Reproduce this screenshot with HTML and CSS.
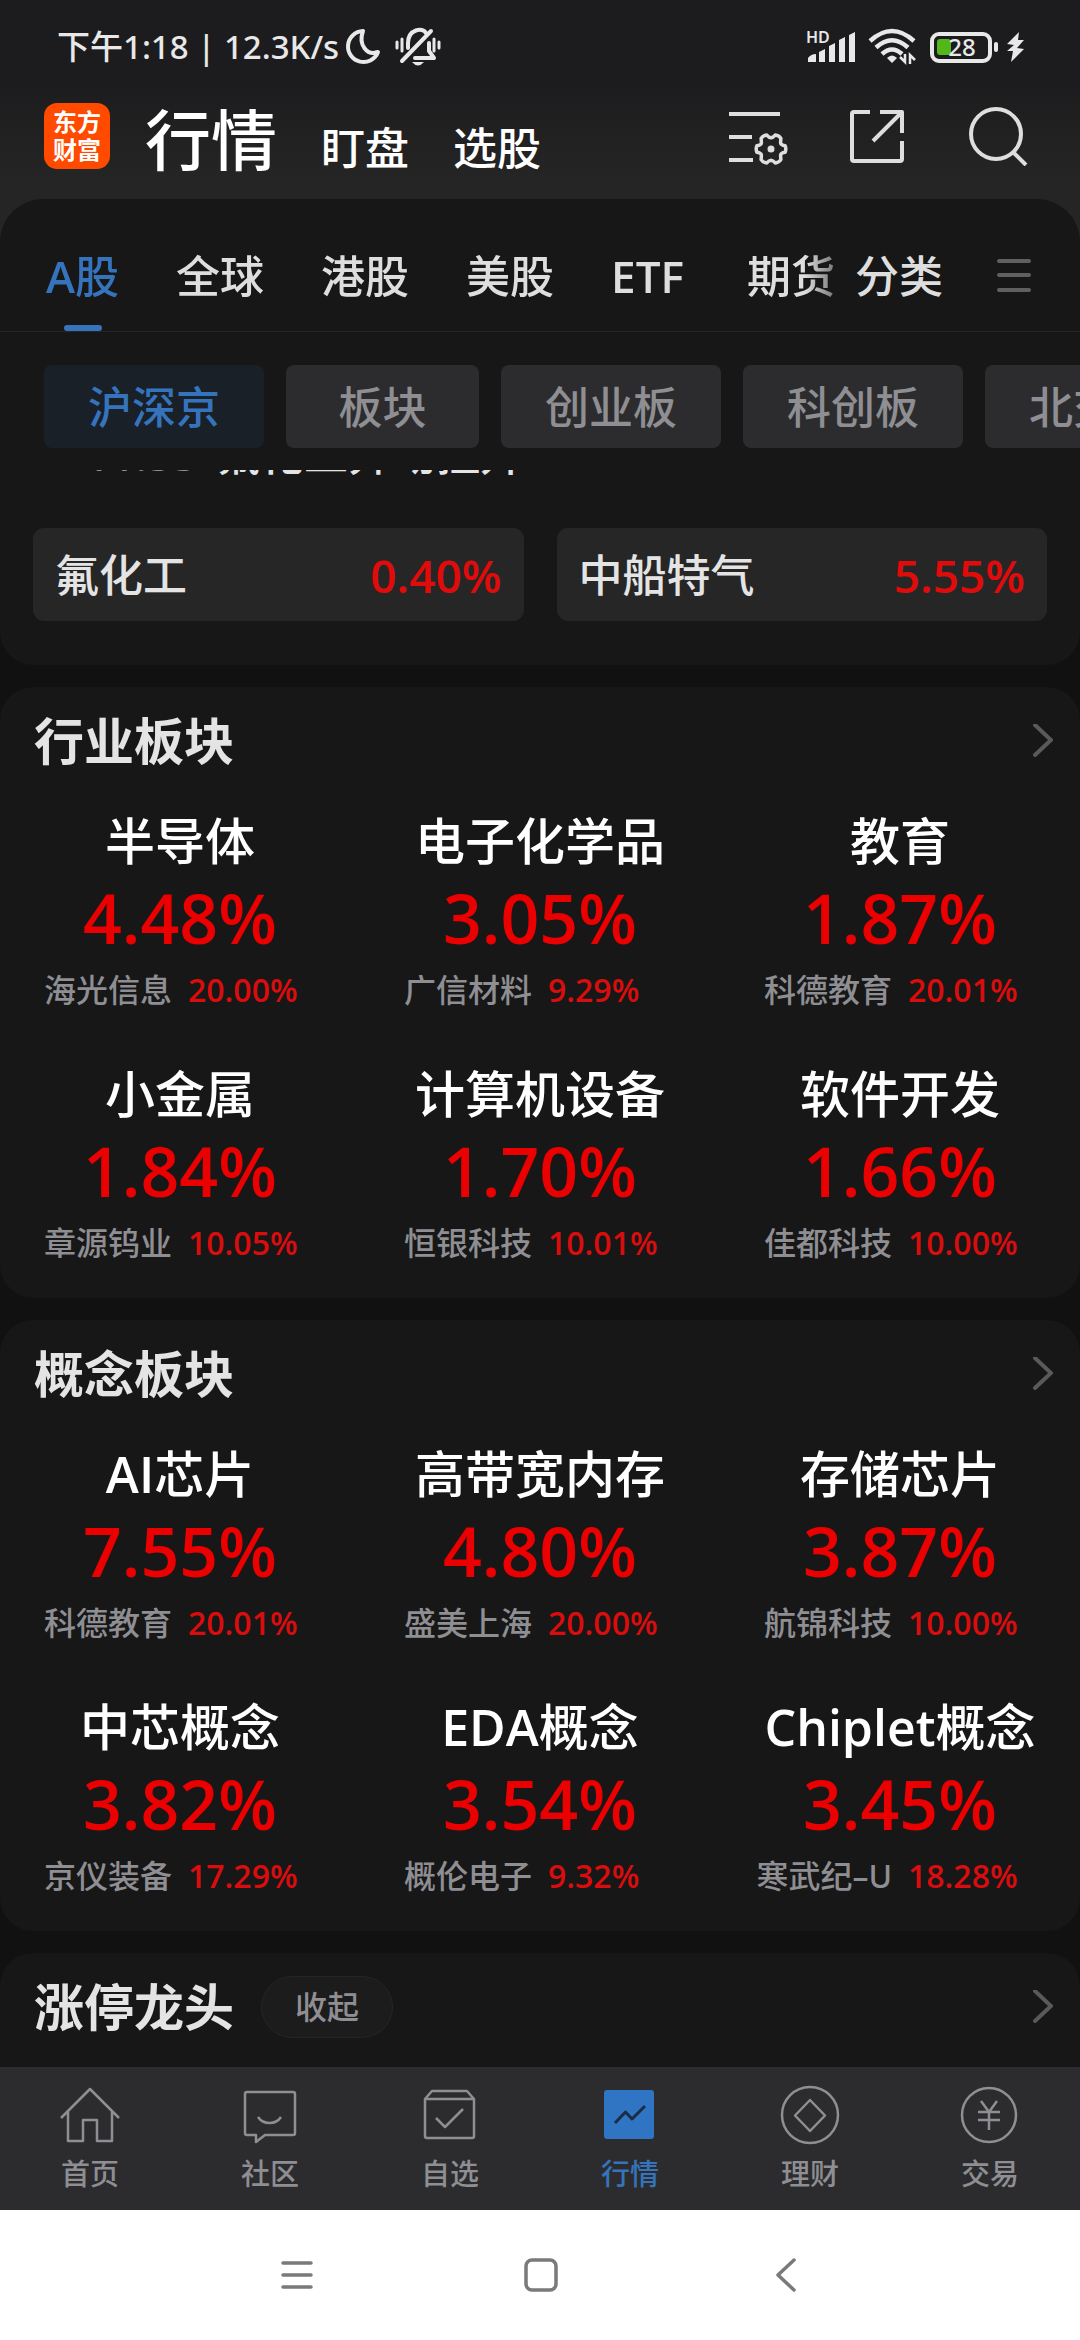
FILE: index.html
```html
<!DOCTYPE html>
<html lang="zh-CN">
<head>
<meta charset="utf-8">
<meta name="viewport" content="width=device-width, initial-scale=1">
<title>行情</title>
<link rel="stylesheet" href="styles.css">
</head>
<body>
<div class="app">
  <div class="status">
    <span class="status-text">下午1:18 | 12.3K/s</span>
    <svg class="moon" width="36" height="38" viewBox="0 0 36 38" fill="none" stroke="#e8e8e8" stroke-width="4" stroke-linejoin="round"><path d="M18 3A15.500 15.500 0 1 0 33 24C22 28 13 17 18 3Z"/></svg>
    <svg width="46" height="40" viewBox="0 0 46 40" fill="none" stroke="#e8e8e8" stroke-width="4" stroke-linecap="round" stroke-linejoin="round"><path d="M13 21V16C13 2 28 0 31 6M34 16V24L39 31H20M7 34L36 4"/><path d="M2 15V21M7 12V24M39 12V24M44 15V21" stroke-width="3"/><path d="M17 35H29Q23 42 17 35Z" fill="#e8e8e8" stroke="none"/></svg>
    <span class="grow"></span>
    <svg width="51" height="38" viewBox="0 0 51 38" fill="#e8e8e8"><text x="0" y="15" class="hd">HD</text><path d="M2 34V30Q5 26 10 26V34ZM13 34V24L19 21V34ZM23 34V18L29 15V34ZM33 34V12L39 9V34ZM43 34V7L49 4V34Z"/></svg>
    <svg class="wifi" width="48" height="38" viewBox="0 0 48 38" fill="none" stroke="#e8e8e8" stroke-width="4.500"><path d="M2 13Q24 -7 46 13M8 19.500Q24 5 40 19.500M14 26Q24 17 34 26"/><path d="M24 35L19 30Q24 25 29 30Z" fill="#e8e8e8" stroke="none"/><path d="M37 26V34L32 29M42 36V27L47 32" stroke-width="2.500"/></svg>
    <svg class="battery" width="68" height="32" viewBox="0 0 68 32"><rect x="2" y="3" width="58" height="27" rx="7" fill="none" stroke="#e8e8e8" stroke-width="4"/><rect x="7" y="8" width="14" height="16" rx="3" fill="#52b718"/><rect x="64" y="11" width="4" height="10" rx="2" fill="#e8e8e8"/><text x="32" y="25" text-anchor="middle" class="level">28</text></svg>
    <svg class="bolt" width="20" height="32" viewBox="0 0 20 32" fill="#e8e8e8"><path d="M13 1L1 13L8 14L1 20L7 20L5 31L18 18L11 17L18 9H12Z"/></svg>
  </div>

  <header class="topbar">
    <div class="logo"><span>东方</span><span>财富</span></div>
    <nav class="primary">
      <a href="#" class="current">行情</a>
      <a href="#">盯盘</a>
      <a href="#">选股</a>
    </nav>
    <div class="tools">
      <button aria-label="设置"><svg width="60" height="60" viewBox="0 0 60 60" fill="none" stroke="#dedede" stroke-width="4" stroke-linejoin="round"><path d="M1 8H52M1 31H24M1 54H25"/><path transform="translate(43 43)" stroke-width="3.500" d="M14.100 -3.300Q15.500 0 14.100 3.300Q10 4 9.700 5.600Q9.500 7 9.900 10.600Q8 13.500 4.200 13.900Q2 11.300 0 11.200Q-2 11.300 -4.200 13.900Q-8 13.500 -9.900 10.600Q-9.500 7 -9.700 5.600Q-10 4 -14.100 3.300Q-15.500 0 -14.100 -3.300Q-10 -4 -9.700 -5.600Q-9.500 -7 -9.900 -10.600Q-8 -13.500 -4.200 -13.900Q-2 -11.300 0 -11.200Q2 -11.300 4.200 -13.900Q8 -13.500 9.900 -10.600Q9.500 -7 9.700 -5.600Q10 -4 14.100 -3.300Z"/><circle cx="43" cy="43" r="3.500" fill="#dedede" stroke="none"/></svg></button>
      <button aria-label="分享"><svg width="60" height="60" viewBox="0 0 60 60" fill="none" stroke="#dedede" stroke-width="4" stroke-linejoin="round"><path d="M22 6H6Q4 6 4 8V53Q4 55 6 55H52Q54 55 54 53V35M32 6H54V27M53 7L25 35"/></svg></button>
      <button aria-label="搜索"><svg width="60" height="60" viewBox="0 0 60 60" fill="none" stroke="#dedede" stroke-width="4"><circle cx="28" cy="28" r="25"/><path d="M45 46L58 59"/></svg></button>
    </div>
  </header>

  <main class="market">
    <div class="panel">
      <div class="tabbar">
        <nav class="tabs">
          <a href="#" class="active"><span class="latin">A</span>股</a><a href="#">全球</a><a href="#">港股</a><a href="#">美股</a><a href="#" class="latin etf">ETF</a><a href="#">期货</a>
        </nav>
        <div class="tabs-more">
          <a href="#">分类</a>
          <button aria-label="菜单"><svg width="34" height="34" viewBox="0 0 34 34" stroke="#606060" stroke-width="4" stroke-linecap="round"><path d="M2 2H32M2 16H32M2 31H32"/></svg></button>
        </div>
      </div>
      <div class="chips">
        <button class="chip selected">沪深京</button><button class="chip short">板块</button><button class="chip">创业板</button><button class="chip">科创板</button><button class="chip">北交所</button>
      </div>
    </div>

    <div class="scroll">
      <section class="alerts">
        <p class="alert"><time>11:33</time><span>氟化工异动拉升</span></p>
        <div class="cards">
          <a href="#" class="card"><span>氟化工</span><b>0.40%</b></a>
          <a href="#" class="card"><span>中船特气</span><b>5.55%</b></a>
        </div>
      </section>

      <section class="sector">
        <div class="head"><h2>行业板块</h2><svg class="chev" width="20" height="34" viewBox="0 0 20 34"><path d="M2 1L18 16L2 31"/></svg></div>
        <div class="grid">
          <a href="#" class="tile"><h3>半导体</h3><strong>4.48%</strong><div class="lead"><span>海光信息</span><em>20.00%</em></div></a>
          <a href="#" class="tile"><h3>电子化学品</h3><strong>3.05%</strong><div class="lead"><span>广信材料</span><em>9.29%</em></div></a>
          <a href="#" class="tile"><h3>教育</h3><strong>1.87%</strong><div class="lead"><span>科德教育</span><em>20.01%</em></div></a>
          <a href="#" class="tile"><h3>小金属</h3><strong>1.84%</strong><div class="lead"><span>章源钨业</span><em>10.05%</em></div></a>
          <a href="#" class="tile"><h3>计算机设备</h3><strong>1.70%</strong><div class="lead"><span>恒银科技</span><em>10.01%</em></div></a>
          <a href="#" class="tile"><h3>软件开发</h3><strong>1.66%</strong><div class="lead"><span>佳都科技</span><em>10.00%</em></div></a>
        </div>
      </section>

      <section class="sector">
        <div class="head"><h2>概念板块</h2><svg class="chev" width="20" height="34" viewBox="0 0 20 34"><path d="M2 1L18 16L2 31"/></svg></div>
        <div class="grid">
          <a href="#" class="tile"><h3><span class="latin">AI</span>芯片</h3><strong>7.55%</strong><div class="lead"><span>科德教育</span><em>20.01%</em></div></a>
          <a href="#" class="tile"><h3>高带宽内存</h3><strong>4.80%</strong><div class="lead"><span>盛美上海</span><em>20.00%</em></div></a>
          <a href="#" class="tile"><h3>存储芯片</h3><strong>3.87%</strong><div class="lead"><span>航锦科技</span><em>10.00%</em></div></a>
          <a href="#" class="tile"><h3>中芯概念</h3><strong>3.82%</strong><div class="lead"><span>京仪装备</span><em>17.29%</em></div></a>
          <a href="#" class="tile"><h3><span class="latin">EDA</span>概念</h3><strong>3.54%</strong><div class="lead"><span>概伦电子</span><em>9.32%</em></div></a>
          <a href="#" class="tile"><h3><span class="latin">Chiplet</span>概念</h3><strong>3.45%</strong><div class="lead"><span>寒武纪–U</span><em>18.28%</em></div></a>
        </div>
      </section>

      <section class="sector last">
        <div class="head"><h2>涨停龙头</h2><button class="fold">收起</button><svg class="chev" width="20" height="34" viewBox="0 0 20 34"><path d="M2 1L18 16L2 31"/></svg></div>
      </section>
    </div>
  </main>

  <nav class="bottom">
    <a href="#"><svg width="60" height="60" viewBox="0 0 60 60"><path d="M1 33L30 4L59 33M8 27V56H23V35H37V56H52V27"/></svg><span>首页</span></a>
    <a href="#"><svg width="60" height="60" viewBox="0 0 60 60"><path d="M7 7H53Q55 7 55 9V48Q55 50 53 50H25L16 57V50H7Q5 50 5 48V9Q5 7 7 7ZM18 32Q22 38 29.500 38T41 32"/></svg><span>社区</span></a>
    <a href="#"><svg width="60" height="60" viewBox="0 0 60 60"><path d="M5 14L12 6H47L54 14V51Q54 53 52 53H7Q5 53 5 51V14H54M16 33L25 42L43 24"/></svg><span>自选</span></a>
    <a href="#" class="on"><svg width="60" height="60" viewBox="0 0 60 60"><rect x="4" y="5" width="50" height="49" rx="3" fill="#3074c4" stroke="none"/><path d="M15 38L25.500 27L32 34L45 21" stroke="#1b2d42" stroke-width="3"/></svg><span>行情</span></a>
    <a href="#"><svg width="60" height="60" viewBox="0 0 60 60"><circle cx="30" cy="30" r="28"/><path d="M30 15L45 30.500L30 46L15 30.500Z"/></svg><span>理财</span></a>
    <a href="#"><svg width="60" height="60" viewBox="0 0 60 60"><circle cx="29" cy="30" r="27"/><path d="M21 16L29 27L37 16M29 27V45M18 27H40M18 35H40"/></svg><span>交易</span></a>
  </nav>
  <div class="sysnav">
    <button aria-label="最近任务"><svg width="60" height="36" viewBox="0 0 60 36"><path d="M16 6H44M16 18H44M16 30H44" stroke-width="3.500"/></svg></button>
    <button aria-label="主屏幕"><svg width="60" height="36" viewBox="0 0 60 36"><rect x="15" y="3" width="30" height="30" rx="6" stroke-width="3.500"/></svg></button>
    <button aria-label="返回"><svg width="60" height="36" viewBox="0 0 60 36"><path d="M39 3L23 18L39 33" stroke-width="3.500"/></svg></button>
  </div>
</div>
</body>
</html>
```
FILE: styles.css
```css
* { box-sizing: border-box; }
body {
  margin: 0;
  background: #111;
  color: #e4e4e4;
  font-family: "Noto Sans", "Noto Sans CJK SC", sans-serif;
  font-weight: 500;
}
a { color: inherit; text-decoration: none; }
button { margin: 0; padding: 0; border: 0; background: none; color: inherit; font: inherit; }
h2, h3, p { margin: 0; }
svg { display: block; flex: none; }
em { font-style: normal; }
.latin { font-family: "Open Sans", sans-serif; font-weight: 600; }

.app {
  display: flex;
  flex-direction: column;
  height: 100vh;
  overflow: hidden;
  background: #111 linear-gradient(#1c1c1e 80px, #252525 180px) no-repeat 0 0 / 100% 245px;
}

/* status bar */
.status {
  display: flex;
  align-items: center;
  height: 72px;
  padding: 22px 54px 0 57px;
  color: #e8e8e8;
}
.status-text { font-size: 33px; line-height: 48px; white-space: nowrap; }
.moon { margin: 0 14px 0 6px; }
.grow { flex: 1; }
.hd { font-size: 16px; font-weight: 600; }
.level { font-size: 24px; fill: #e8e8e8; }
.wifi { margin: 0 14px 0 11px; }
.bolt { margin-left: 8px; }

/* top bar */
.topbar {
  display: flex;
  align-items: center;
  height: 127px;
  padding: 0 52px 0 44px;
  color: #fff;
}
.logo {
  display: flex;
  flex-direction: column;
  justify-content: center;
  width: 66px;
  height: 66px;
  border-radius: 13px;
  background: #ff4a00;
  font-size: 24px;
  font-weight: 700;
  line-height: 28px;
  text-align: center;
}
.primary {
  display: flex;
  align-items: baseline;
  gap: 44px;
  margin-left: 35px;
  padding-top: 16px;
  font-size: 44px;
  line-height: 80px;
}
.primary .current { font-size: 66px; }
.tools { display: flex; gap: 60px; margin-left: auto; }

/* market panel */
.market { display: flex; flex: 1; flex-direction: column; min-height: 0; }
.panel { border-radius: 43px 43px 0 0; background: #171717; font-size: 44px; }
.tabbar { display: flex; height: 133px; border-bottom: 1px solid #262626; line-height: 60px; color: #dedede; }
.tabs {
  display: flex;
  flex: 1;
  gap: 57px;
  min-width: 0;
  padding: 47px 0 0 46px;
  overflow: hidden;
  white-space: nowrap;
  -webkit-mask-image: linear-gradient(90deg, #000 calc(100% - 50px), rgba(0, 0, 0, .3) calc(100% - 10px));
  mask-image: linear-gradient(90deg, #000 calc(100% - 50px), rgba(0, 0, 0, .3) calc(100% - 10px));
}
.tabs .etf { margin-right: 6px; }
.tabs .active { position: relative; color: #3574bd; }
.tabs .active::after {
  content: "";
  position: absolute;
  bottom: 0;
  left: 50%;
  width: 38px;
  height: 6px;
  margin-left: -19px;
  border-radius: 3px;
  background: #3574bd;
}
.tabs-more { display: flex; align-items: flex-start; gap: 54px; padding: 47px 49px 0 0; }
.tabs-more button { padding-top: 13px; }

.chips { display: flex; gap: 22px; padding: 33px 0 22px 44px; overflow: hidden; }
.chip {
  flex: none;
  width: 220px;
  height: 83px;
  border-radius: 8px;
  background: #2c2c2e;
  color: #8e8e93;
  line-height: 60px;
}
.chip.short { width: 193px; }
.chip.selected { background: #192028; color: #3574bd; }

/* scrolled content */
.scroll { flex: 1; min-height: 0; overflow: hidden; }
.alerts { padding: 0 33px 44px; border-radius: 0 0 33px 33px; background: #171717; font-size: 44px; line-height: 60px; }
.alert { display: flex; gap: 32px; margin: -46px 0 44px; padding-left: 52px; }
.alert time { width: 99px; color: #8e8e93; text-align: right; white-space: nowrap; }
.cards { display: grid; grid-template-columns: 1fr 1fr; gap: 33px; }
.card {
  display: flex;
  align-items: center;
  justify-content: space-between;
  height: 93px;
  padding: 0 22px;
  border-radius: 11px;
  background: #262626;
}
.card b, .tile strong, .lead em { font-family: "Open Sans", sans-serif; font-weight: 600; }
.card b { color: #e00b0b; font-size: 46px; }

.sector { margin-top: 22px; padding-bottom: 35px; border-radius: 33px; background: #171717; }
.last { min-height: 200px; }
.head { display: flex; align-items: center; height: 107px; padding: 0 27px 0 34px; }
.head h2 { font-size: 50px; font-weight: 700; line-height: 60px; }
.chev { margin-left: auto; fill: none; stroke: #5a5a5a; stroke-width: 4; stroke-linecap: round; }
.fold {
  width: 132px;
  height: 62px;
  margin-left: 27px;
  padding-bottom: 3px;
  border: 1px solid #252525;
  border-radius: 31px;
  background: #1c1c1c;
  color: #8e8e93;
  font-size: 32px;
}
.grid { display: grid; grid-template-columns: repeat(3, minmax(0, 1fr)); row-gap: 54px; padding-top: 17px; }
.tile { display: flex; flex-direction: column; align-items: center; white-space: nowrap; }
.tile h3 { height: 60px; color: #fff; font-size: 50px; font-weight: 500; line-height: 60px; }
.tile strong { margin-top: 11px; color: #ea0000; font-size: 68px; line-height: 72px; }
.lead {
  display: grid;
  grid-template-columns: 1fr 1fr;
  gap: 16px;
  width: 100%;
  margin-top: 16px;
  color: #8e8e93;
  font-size: 32px;
  line-height: 40px;
}
.lead span { text-align: right; }
.lead em { color: #d90d0d; }

/* bottom navigation */
.bottom { display: grid; flex: none; grid-template-columns: repeat(6, 1fr); height: 143px; background: #2c2c2e; }
.bottom a { display: flex; flex-direction: column; align-items: center; padding-top: 18px; color: #8e8e93; font-size: 29px; line-height: 40px; }
.bottom svg { margin-bottom: 9px; fill: none; stroke: #8e8e93; stroke-width: 2.5px; stroke-linejoin: round; }
.bottom .on { color: #3574bd; }

.sysnav { display: flex; flex: none; align-items: center; justify-content: center; gap: 184px; height: 130px; padding-left: 2px; background: #fff; }
.sysnav svg { fill: none; stroke: #7a7a7a; stroke-linecap: round; stroke-linejoin: round; }
```
